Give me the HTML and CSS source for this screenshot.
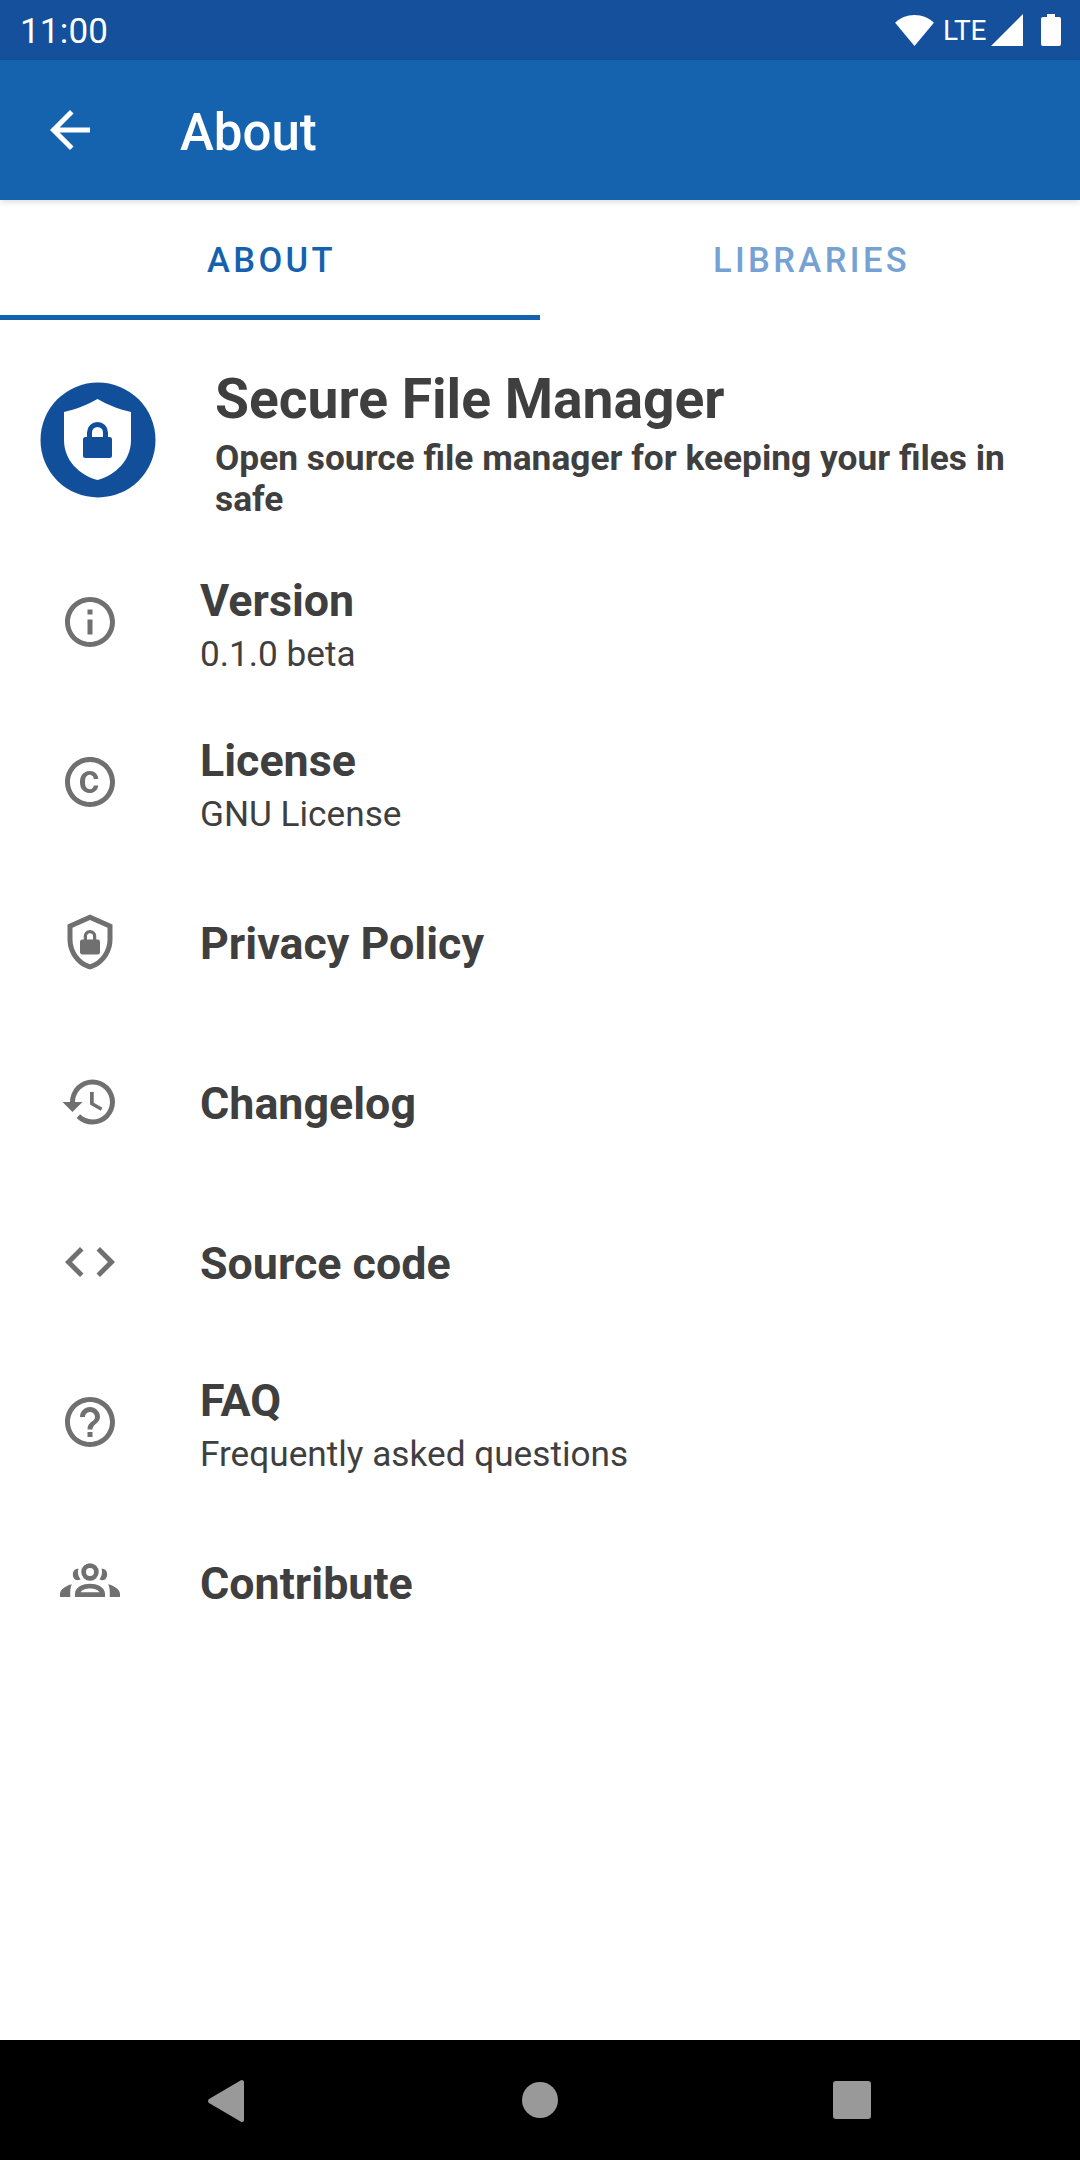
FILE: index.html
```html
<!DOCTYPE html>
<html lang="en">
<head>
<meta charset="utf-8">
<title>About</title>
<link rel="stylesheet" href="styles.css">
</head>
<body>
<div class="screen">
  <div class="status">
    <span class="clock">11:00</span>
    <div class="status-icons">
      <svg class="ic-wifi" viewBox="0 0 40 32"><path d="M20 32 0 8C5 3 12 0 20 0s15 3 20 8z"/></svg>
      <span class="lte">LTE</span>
      <svg class="ic-signal" viewBox="0 0 32 32"><path d="M32 0v32H0z"/></svg>
      <svg class="ic-batt" viewBox="0 0 20 32"><path d="M6 0h8v3h4a2 2 0 0 1 2 2v25a2 2 0 0 1-2 2H2a2 2 0 0 1-2-2V5a2 2 0 0 1 2-2h4z"/></svg>
    </div>
  </div>
  <header class="appbar">
    <svg class="ic-back" viewBox="0 0 24 24"><path d="M20 11H7.830l5.590-5.590L12 4l-8 8 8 8 1.410-1.410L7.830 13H20z"/></svg>
    <h1 class="appbar-title">About</h1>
  </header>
  <nav class="tabs">
    <div class="tab tab-active">ABOUT</div>
    <div class="tab">LIBRARIES</div>
  </nav>
  <main class="content">
    <section class="hero">
      <svg class="logo" viewBox="0 0 116 116">
        <circle cx="58" cy="58" r="57.5" fill="#114f9b"/>
        <path fill="#fff" d="M57.500 17 C66 22 78 27 91 30 V58 C91 78 76 93 57.500 98 C39 93 24 78 24 58 V30 C37 27 49 22 57.500 17Z"/>
        <path fill="#114f9b" d="M45.500 55h1.500v-4.500a10.500 10.500 0 0 1 21 0V55h1.500a2.500 2.500 0 0 1 2.500 2.500v16a2.500 2.500 0 0 1-2.500 2.500h-24a2.500 2.500 0 0 1-2.500-2.500v-16a2.500 2.500 0 0 1 2.500-2.500zm6.500 0h11v-4.500a5.500 5.500 0 0 0-11 0z"/>
      </svg>
      <div class="hero-text">
        <div class="hero-title">Secure File Manager</div>
        <div class="hero-sub">Open source file manager for keeping your files in safe</div>
      </div>
    </section>
    <div class="row">
      <svg class="icon" viewBox="0 0 24 24"><path d="M11 7h2v2h-2zm0 4h2v6h-2zm1-9C6.480 2 2 6.480 2 12s4.480 10 10 10 10-4.480 10-10S17.520 2 12 2zm0 18c-4.410 0-8-3.590-8-8s3.590-8 8-8 8 3.590 8 8-3.590 8-8 8z"/></svg>
      <div class="row-text"><div class="row-title">Version</div><div class="row-sub">0.1.0 beta</div></div>
    </div>
    <div class="row">
      <svg class="icon" viewBox="0 0 24 24"><path d="M10.080 10.860c.05-.33.160-.62.300-.87s.340-.46.590-.62c.240-.15.540-.22.910-.23.230.010.440.050.630.130.200.090.380.210.520.360s.250.330.340.530.130.420.140.640h1.790c-.02-.47-.110-.9-.28-1.290s-.4-.73-.7-1.010-.66-.5-1.080-.66-.88-.23-1.390-.23c-.65 0-1.220.110-1.700.34s-.88.530-1.200.92-.56.840-.71 1.360S8 11.290 8 11.870v.27c0 .58.080 1.120.23 1.640s.39.970.71 1.350.72.690 1.200.91c.48.220 1.050.340 1.700.34.470 0 .91-.08 1.320-.23s.77-.36 1.080-.63.560-.58.740-.94.290-.74.300-1.150h-1.790c-.01.210-.060.400-.15.580s-.21.330-.36.460-.32.230-.52.300c-.19.070-.39.090-.6.100-.36-.01-.66-.08-.89-.23-.25-.16-.45-.37-.59-.62s-.25-.55-.3-.88-.08-.67-.08-1v-.27c0-.35.030-.68.080-1.010zM12 2C6.480 2 2 6.480 2 12s4.480 10 10 10 10-4.480 10-10S17.520 2 12 2zm0 18c-4.410 0-8-3.590-8-8s3.590-8 8-8 8 3.590 8 8-3.590 8-8 8z"/></svg>
      <div class="row-text"><div class="row-title">License</div><div class="row-sub">GNU License</div></div>
    </div>
    <div class="row">
      <svg class="icon" viewBox="0 0 24 24"><path d="M12 1 3 5v6c0 5.550 3.840 10.740 9 12 5.160-1.260 9-6.450 9-12V5zm7 10c0 4.520-2.980 8.690-7 9.930-4.020-1.240-7-5.410-7-9.930V6.300l7-3.110 7 3.110z"/><path d="M9.500 11V9.700a2.500 2.500 0 0 1 5 0V11h.6c.5 0 .9.400.9.900v4.200c0 .5-.4.900-.9.900H8.900c-.5 0-.9-.4-.9-.9v-4.200c0-.5.400-.9.900-.9zm1.300 0h2.400V9.700a1.200 1.200 0 0 0-2.400 0z"/></svg>
      <div class="row-text"><div class="row-title">Privacy Policy</div></div>
    </div>
    <div class="row">
      <svg class="icon" viewBox="0 0 24 24"><path d="M13 3a9 9 0 0 0-9 9H1l3.890 3.890.07.140L9 12H6c0-3.870 3.130-7 7-7s7 3.130 7 7-3.130 7-7 7c-1.930 0-3.680-.79-4.940-2.060l-1.420 1.420A8.954 8.954 0 0 0 13 21a9 9 0 0 0 0-18zm-1 5v5l4.280 2.540.72-1.210-3.500-2.080V8z"/></svg>
      <div class="row-text"><div class="row-title">Changelog</div></div>
    </div>
    <div class="row">
      <svg class="icon" viewBox="0 0 24 24"><path d="M9.400 16.600 4.800 12l4.600-4.600L8 6l-6 6 6 6zm5.200 0 4.600-4.600-4.600-4.600L16 6l6 6-6 6z"/></svg>
      <div class="row-text"><div class="row-title">Source code</div></div>
    </div>
    <div class="row">
      <svg class="icon" viewBox="0 0 24 24"><path d="M11 18h2v-2h-2zm1-16C6.480 2 2 6.480 2 12s4.480 10 10 10 10-4.480 10-10S17.520 2 12 2zm0 18c-4.410 0-8-3.590-8-8s3.590-8 8-8 8 3.590 8 8-3.590 8-8 8zm0-14c-2.210 0-4 1.790-4 4h2c0-1.100.9-2 2-2s2 .9 2 2c0 2-3 1.750-3 5h2c0-2.250 3-2.500 3-5 0-2.210-1.790-4-4-4z"/></svg>
      <div class="row-text"><div class="row-title">FAQ</div><div class="row-sub">Frequently asked questions</div></div>
    </div>
    <div class="row">
      <svg class="icon" viewBox="0 0 24 24"><path d="M12 4.500a3.500 3.500 0 1 1 0 7 3.500 3.500 0 0 1 0-7zm0 1.900a1.600 1.600 0 1 0 0 3.200 1.600 1.600 0 0 0 0-3.200zM5.800 7.200c.6-.5 1.200-.6 1.600-.5-.5 1.300-.2 3 .8 4.200-.6.500-1.500.6-2.200.1-1-.8-1.200-2.900-.2-3.800zm12.400 0c1 .9.800 3-.2 3.800-.7.500-1.600.4-2.200-.1 1-1.200 1.300-2.900.8-4.200.4-.1 1 0 1.600.5zM12 12.700c2.700 0 5.800 1.200 6 3.800V18H6v-1.500c.2-2.600 3.300-3.800 6-3.800zm0 1.900c-1.700 0-3.300.6-3.800 1.500h7.600c-.5-.9-2.100-1.500-3.800-1.500zM4.700 12.900c-.4.900-.6 1.900-.6 3.100V18H0v-1.200c0-1.800 2.400-3.400 4.700-3.900zm14.600 0c2.300.5 4.700 2.100 4.700 3.900V18h-4.100v-2c0-1.200-.2-2.200-.6-3.100z"/></svg>
      <div class="row-text"><div class="row-title">Contribute</div></div>
    </div>
  </main>
  <footer class="navbar">
    <svg class="nav-back" viewBox="0 0 36 42"><path d="M34 0c1 0 2 1 2 2v38c0 1-1 2-2 2-.5 0-1-.2-1.500-.6L1 23c-1.300-1-1.300-3 0-4L32.500.6C33 .2 33.500 0 34 0z"/></svg>
    <span class="nav-home"></span>
    <span class="nav-recent"></span>
  </footer>
</div>
</body>
</html>
```
FILE: styles.css
```css
* { box-sizing: border-box; }
html, body { margin: 0; padding: 0; }
body { background: #fff; font-family: Roboto, "Noto Sans", sans-serif; }
.screen { width: 1080px; height: 2160px; display: flex; flex-direction: column; overflow: hidden; }

.status { height: 60px; flex: none; background: #14509b; color: #fff; display: flex; align-items: center; justify-content: space-between; padding: 0 19px 0 20px; }
.clock { font-size: 35px; line-height: 60px; letter-spacing: .2px; padding-top: 3px; }
.status-icons { display: flex; align-items: center; }
.ic-wifi { width: 39px; height: 31px; fill: #fff; }
.lte { font-size: 28px; margin: 0 5px 0 9px; letter-spacing: -.3px; }
.ic-signal { width: 32px; height: 32px; fill: #fff; }
.ic-batt { width: 20px; height: 32px; fill: #fff; margin-left: 18px; }

.appbar { height: 140px; flex: none; background: #1563ae; color: #fff; display: flex; align-items: center; padding-left: 40px; position: relative; z-index: 1; box-shadow: 0 2px 6px rgba(0,0,0,.14); }
.ic-back { width: 60px; height: 60px; fill: #fff; }
.appbar-title { margin: 5px 0 0 80px; font-size: 51px; font-weight: 500; line-height: 56px; }

.tabs { height: 120px; flex: none; display: flex; }
.tab { width: 540px; display: flex; align-items: center; justify-content: center; padding-left: 3px; font-size: 34.5px; font-weight: 500; letter-spacing: 3.4px; color: #76a2d3; }
.tab-active { color: #1462ad; box-shadow: inset 0 -5px 0 #1462ad; }

.content { flex: 1; color: #3f3f3f; }
.hero { display: flex; align-items: center; height: 222px; padding: 18px 0 0 40px; }
.logo { width: 116px; height: 116px; flex: none; }
.hero-text { margin-left: 59px; padding-right: 50px; }
.hero-title { font-size: 55.2px; font-weight: 700; line-height: 77px; }
.hero-sub { font-size: 35.3px; font-weight: 700; line-height: 41px; }

.row { height: 160px; display: flex; align-items: center; padding-left: 60px; }
.icon { width: 60px; height: 60px; flex: none; fill: #707070; }
.row-text { margin-left: 80px; padding-top: 3px; }
.row-title { font-size: 44.8px; font-weight: 700; line-height: 52px; }
.row-sub { font-size: 35.2px; line-height: 46px; margin: 4px 0 -4px; }

.navbar { height: 120px; flex: none; background: #000; position: relative; }
.nav-back { position: absolute; left: 208px; top: 40px; width: 36px; height: 42px; fill: #999; }
.nav-home { position: absolute; left: 522px; top: 42px; width: 36px; height: 36px; border-radius: 50%; background: #999; }
.nav-recent { position: absolute; left: 833px; top: 41px; width: 38px; height: 38px; border-radius: 3px; background: #999; }
```
